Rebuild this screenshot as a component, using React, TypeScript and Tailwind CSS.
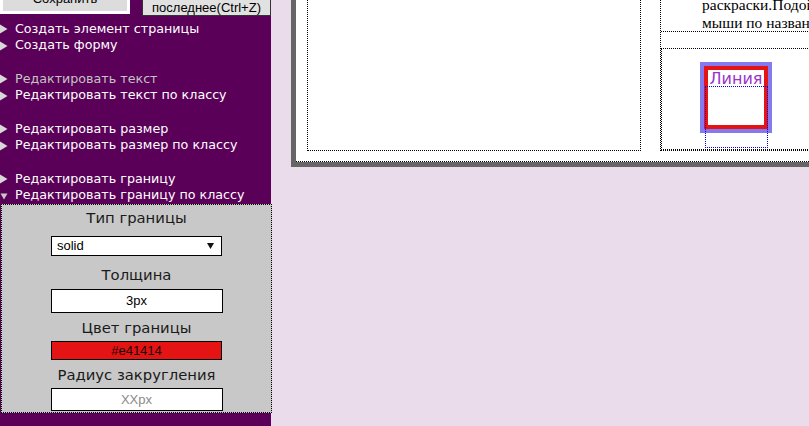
import React from "react";

const menu: { label: string; dim?: boolean; open?: boolean }[][] = [
  [{ label: "Создать элемент страницы" }, { label: "Создать форму" }],
  [{ label: "Редактировать текст", dim: true }, { label: "Редактировать текст по классу" }],
  [{ label: "Редактировать размер" }, { label: "Редактировать размер по классу" }],
  [{ label: "Редактировать границу" }, { label: "Редактировать границу по классу", open: true }],
];

const Arrow = ({ open }: { open?: boolean }) =>
  open ? (
    <svg width="8" height="8" viewBox="0 0 8 8" className="shrink-0">
      <polygon points="0.5,1.5 7.5,1.5 4,7.5" fill="#c8c8c8" />
    </svg>
  ) : (
    <svg width="8" height="10" viewBox="0 0 8 10" className="shrink-0">
      <polygon points="0,0.5 7.5,5 0,9.5" fill="#d8d8d8" />
    </svg>
  );

const Label = ({ children, className = "" }: { children: React.ReactNode; className?: string }) => (
  <div className={`text-[14.8px] leading-[18px] text-[#1a1a1a] text-center ${className}`}>{children}</div>
);

export default function App() {
  return (
    <div className="flex w-screen h-screen overflow-hidden bg-[#eadcea] font-['DejaVu_Sans',sans-serif]">
      {/* sidebar */}
      <aside className="w-[271px] shrink-0 bg-[#5b0059] flex flex-col">
        <div className="h-[16px] overflow-hidden flex items-end font-['Liberation_Sans',Arial,sans-serif] text-[13px] leading-[15px] text-black">
          <div className="w-[130px] h-[32px] border-[3px] border-white bg-[#dcdcdc] flex items-end justify-center pb-[5px] mb-[2px]">
            Сохранить
          </div>
          <div className="ml-[12px] w-[129px] h-[34px] border border-[#333] bg-[#e1e1e1] flex flex-col items-center justify-end">
            <span>Отменить</span>
            <span>последнее(Ctrl+Z)</span>
          </div>
        </div>

        <nav className="pt-[4.5px] text-[12.7px] leading-[16.7px] text-white">
          {menu.map((group, gi) => (
            <div key={gi} className={gi > 0 ? "mt-[16.7px]" : ""}>
              {group.map((item) => (
                <div key={item.label} className="flex items-center whitespace-nowrap">
                  <div className="w-[15px] flex items-center">
                    <Arrow open={item.open} />
                  </div>
                  <span className={item.dim ? "text-[#c4c4c4]" : ""}>{item.label}</span>
                </div>
              ))}
            </div>
          ))}
        </nav>

        {/* border panel */}
        <div className="ml-[1px] w-[271px] h-[209px] border border-dotted border-black bg-[#c8c8c8] flex flex-col items-center font-['DejaVu_Sans',sans-serif]">
          <Label className="mt-[4px]">Тип границы</Label>
          <div className="mt-[9px] w-[171px] h-[20px] border border-black bg-white flex items-center justify-between pl-[5px] pr-[7px] font-['Liberation_Sans',Arial,sans-serif] text-[13px] text-black">
            <span>solid</span>
            <svg width="7" height="6" viewBox="0 0 7 6">
              <polygon points="0,0 7,0 3.5,6" fill="#111" />
            </svg>
          </div>
          <Label className="mt-[10px]">Толщина</Label>
          <div className="mt-[5px] w-[172px] h-[24px] border border-black bg-white flex items-center justify-center font-['Liberation_Sans',Arial,sans-serif] text-[13px] text-black">
            3px
          </div>
          <Label className="mt-[6px]">Цвет границы</Label>
          <div className="mt-[4px] w-[171px] h-[19px] border border-black bg-[#e41414] flex items-center justify-center font-['Liberation_Sans',Arial,sans-serif] text-[13px] text-[#1a0505]">
            #e41414
          </div>
          <Label className="mt-[6px]">Радиус закругления</Label>
          <div className="mt-[4px] w-[172px] h-[23px] border border-black bg-white flex items-center justify-center font-['Liberation_Sans',Arial,sans-serif] text-[13px] text-[#8a8a8a]">
            XXpx
          </div>
        </div>
      </aside>

      {/* canvas */}
      <main className="flex-1 min-w-0 overflow-hidden">
        <div className="ml-[20px] w-[700px] h-[167px] border-l-[5px] border-b-[5px] border-[#666666]">
          <div className="h-[162px] bg-white border-b border-dotted border-black flex">
            <div className="ml-[11px] w-[334px] h-[151px] border-x border-b border-dotted border-black" />
            <div className="ml-[19px] w-[320px] h-[151px] border-l border-b border-dotted border-black flex flex-col">
              <div className="h-[32px] border-b border-dotted border-black overflow-hidden flex flex-col justify-end pl-[41px] font-['Liberation_Serif','Times_New_Roman',serif] text-[15.5px] leading-[17.5px] text-black whitespace-nowrap">
                <div>раскраски.Подойдите курсором</div>
                <div>мыши по названию элемента</div>
              </div>
              <div className="h-[17px] border-b border-dotted border-black" />
              <div className="flex-1 border-l border-b border-dotted border-black">
                <div className="relative mt-[13px] ml-[38px] w-[72px] h-[71px] border-4 border-[#8479ee]">
                  <div className="h-full border-4 border-[#e41414] bg-white">
                    <div className="text-center text-[16px] leading-[17px] text-[#9a32cc]">Линия</div>
                  </div>
                  <div className="absolute left-[1px] top-[20px] w-[63px] h-[62px] border border-dotted border-[#0000ff]" />
                </div>
              </div>
            </div>
          </div>
        </div>
      </main>
    </div>
  );
}
